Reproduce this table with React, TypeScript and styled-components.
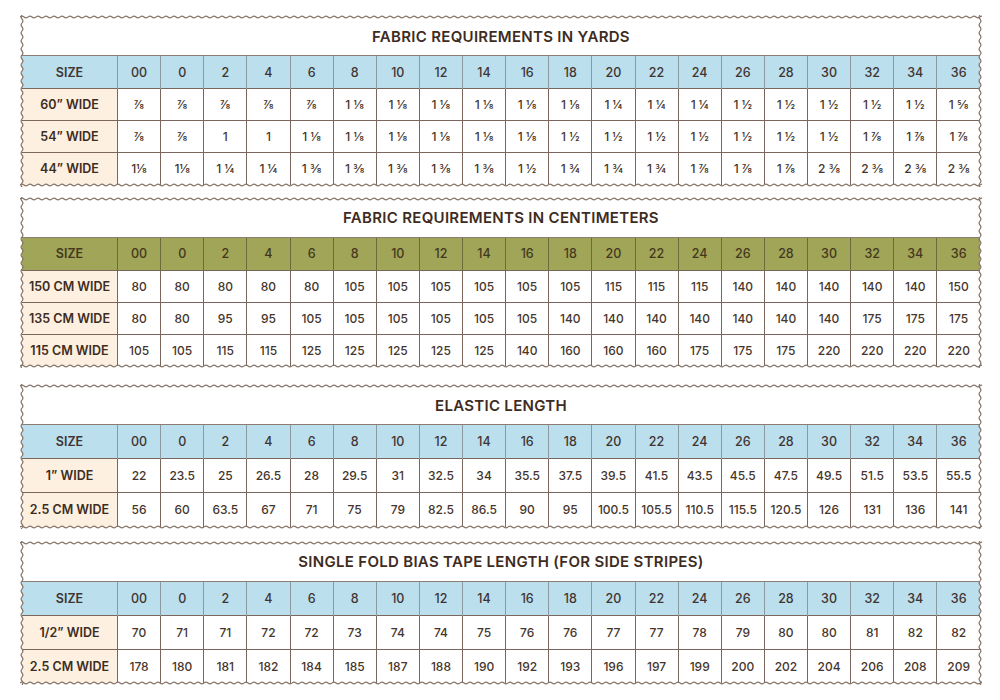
import React from "react";
import styled, { createGlobalStyle } from "styled-components";

const GlobalStyle = createGlobalStyle`
  html, body {
    margin: 0;
    padding: 0;
    background: #ffffff;
  }
  body {
    font-family: Inter, "Open Sans", sans-serif;
    color: #45352c;
  }
`;

const waveH =
  "url(\"data:image/svg+xml;utf8,<svg xmlns='http://www.w3.org/2000/svg' width='8' height='4' viewBox='0 0 8 4'><path d='M0 2 Q2 0.2 4 2 T8 2' fill='none' stroke='%23857469' stroke-width='1.2'/></svg>\")";
const waveV =
  "url(\"data:image/svg+xml;utf8,<svg xmlns='http://www.w3.org/2000/svg' width='4' height='8' viewBox='0 0 4 8'><path d='M2 0 Q0.2 2 2 4 T2 8' fill='none' stroke='%23857469' stroke-width='1.2'/></svg>\")";

const Page = styled.div`
  width: 1000px;
  height: 700px;
  box-sizing: border-box;
  padding: 15px 18px 0 20px;
  display: flex;
  flex-direction: column;
  gap: 11px;
  overflow: hidden;
`;

const Card = styled.section<{ $push: number }>`
  position: relative;
  background: #ffffff;
  padding: 0 2px 2px 2px;
  margin-top: ${(p) => p.$push}px;

  &::after {
    content: "";
    position: absolute;
    inset: 0;
    pointer-events: none;
    background: ${waveH} left top / 8px 4px repeat-x, ${waveH} left bottom / 8px 4px repeat-x,
      ${waveV} left top / 4px 8px repeat-y, ${waveV} right top / 4px 8px repeat-y;
  }
`;

const Title = styled.h2`
  margin: 0;
  height: 40px;
  padding-top: 2px;
  box-sizing: border-box;
  display: flex;
  align-items: center;
  justify-content: center;
  font-size: 15px;
  font-weight: 600;
  letter-spacing: 0.3px;
  color: #3e2c22;
`;

const Table = styled.table`
  width: 100%;
  table-layout: fixed;
  border-collapse: collapse;
  font-family: Inter, "Open Sans", sans-serif;
`;

const HeadCell = styled.th<{ $olive: boolean }>`
  background: ${(p) => (p.$olive ? "#a0a557" : "#bcdfed")};
  color: ${(p) => (p.$olive ? "#45381f" : "#3f3431")};
  font-size: 12.5px;
  font-weight: 500;
  text-align: center;
  padding: 0;
  border-top: 1px solid #8c7c72;
  border-left: 1px solid ${(p) => (p.$olive ? "#6f6a3c" : "#8a9aa0")};

  &:first-child {
    width: 95px;
    border-left: none;
    font-weight: 600;
    font-size: 12.5px;
  }
`;

const LabelCell = styled.th`
  background: #fdf0e0;
  color: #3e2c22;
  font-size: 12.5px;
  font-weight: 600;
  text-align: center;
  padding: 0;
  white-space: nowrap;
  border-top: 1px solid #7a665a;
`;

const ValueCell = styled.td`
  text-align: center;
  font-size: 12px;
  font-weight: 500;
  color: #45352c;
  padding: 0;
  white-space: nowrap;
  border-top: 1px solid #7a665a;
  border-left: 1px solid #7a665a;
`;

const Row = styled.tr<{ $h: number }>`
  height: ${(p) => p.$h}px;
`;

const SIZES = ["00", "0", "2", "4", "6", "8", "10", "12", "14", "16", "18", "20", "22", "24", "26", "28", "30", "32", "34", "36"];

type Chart = {
  title: string;
  olive?: boolean;
  push: number;
  headH: number;
  rowH: number;
  rows: { label: string; values: string[] }[];
};

const charts: Chart[] = [
  {
    title: "FABRIC REQUIREMENTS IN YARDS",
    push: 0,
    headH: 33,
    rowH: 32,
    rows: [
      {
        label: "60\u201D WIDE",
        values: ["⅞", "⅞", "⅞", "⅞", "⅞", "1 ⅛", "1 ⅛", "1 ⅛", "1 ⅛", "1 ⅛", "1 ⅛", "1 ¼", "1 ¼", "1 ¼", "1 ½", "1 ½", "1 ½", "1 ½", "1 ½", "1 ⅝"],
      },
      {
        label: "54\u201D WIDE",
        values: ["⅞", "⅞", "1", "1", "1 ⅛", "1 ⅛", "1 ⅛", "1 ⅛", "1 ⅛", "1 ⅛", "1 ½", "1 ½", "1 ½", "1 ½", "1 ½", "1 ½", "1 ½", "1 ⅞", "1 ⅞", "1 ⅞"],
      },
      {
        label: "44\u201D WIDE",
        values: ["1⅛", "1⅛", "1 ¼", "1 ¼", "1 ⅜", "1 ⅜", "1 ⅜", "1 ⅜", "1 ⅜", "1 ½", "1 ¾", "1 ¾", "1 ¾", "1 ⅞", "1 ⅞", "1 ⅞", "2 ⅜", "2 ⅜", "2 ⅜", "2 ⅜"],
      },
    ],
  },
  {
    title: "FABRIC REQUIREMENTS IN CENTIMETERS",
    olive: true,
    push: -1,
    headH: 33,
    rowH: 32,
    rows: [
      {
        label: "150 CM WIDE",
        values: ["80", "80", "80", "80", "80", "105", "105", "105", "105", "105", "105", "115", "115", "115", "140", "140", "140", "140", "140", "150"],
      },
      {
        label: "135 CM WIDE",
        values: ["80", "80", "95", "95", "105", "105", "105", "105", "105", "105", "140", "140", "140", "140", "140", "140", "140", "175", "175", "175"],
      },
      {
        label: "115 CM WIDE",
        values: ["105", "105", "115", "115", "125", "125", "125", "125", "125", "140", "160", "160", "160", "175", "175", "175", "220", "220", "220", "220"],
      },
    ],
  },
  {
    title: "ELASTIC LENGTH",
    push: 5,
    headH: 34,
    rowH: 34,
    rows: [
      {
        label: "1\u201D WIDE",
        values: ["22", "23.5", "25", "26.5", "28", "29.5", "31", "32.5", "34", "35.5", "37.5", "39.5", "41.5", "43.5", "45.5", "47.5", "49.5", "51.5", "53.5", "55.5"],
      },
      {
        label: "2.5 CM WIDE",
        values: ["56", "60", "63.5", "67", "71", "75", "79", "82.5", "86.5", "90", "95", "100.5", "105.5", "110.5", "115.5", "120.5", "126", "131", "136", "141"],
      },
    ],
  },
  {
    title: "SINGLE FOLD BIAS TAPE LENGTH (FOR SIDE STRIPES)",
    push: 1,
    headH: 34,
    rowH: 34,
    rows: [
      {
        label: "1/2\u201D WIDE",
        values: ["70", "71", "71", "72", "72", "73", "74", "74", "75", "76", "76", "77", "77", "78", "79", "80", "80", "81", "82", "82"],
      },
      {
        label: "2.5 CM WIDE",
        values: ["178", "180", "181", "182", "184", "185", "187", "188", "190", "192", "193", "196", "197", "199", "200", "202", "204", "206", "208", "209"],
      },
    ],
  },
];

function SizeChart({ chart }: { chart: Chart }) {
  return (
    <Card $push={chart.push}>
      <Title>{chart.title}</Title>
      <Table>
        <thead>
          <Row $h={chart.headH}>
            <HeadCell $olive={!!chart.olive}>SIZE</HeadCell>
            {SIZES.map((s) => (
              <HeadCell key={s} $olive={!!chart.olive}>
                {s}
              </HeadCell>
            ))}
          </Row>
        </thead>
        <tbody>
          {chart.rows.map((r) => (
            <Row key={r.label} $h={chart.rowH}>
              <LabelCell>{r.label}</LabelCell>
              {r.values.map((v, i) => (
                <ValueCell key={i}>{v}</ValueCell>
              ))}
            </Row>
          ))}
        </tbody>
      </Table>
    </Card>
  );
}

export default function App() {
  return (
    <>
      <GlobalStyle />
      <Page>
        {charts.map((c) => (
          <SizeChart key={c.title} chart={c} />
        ))}
      </Page>
    </>
  );
}
